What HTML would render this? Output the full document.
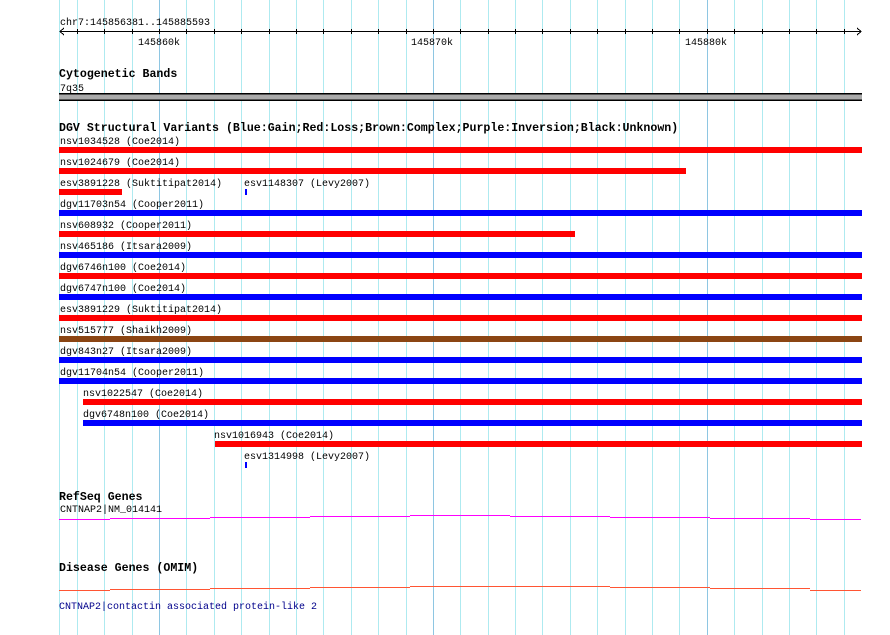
<!DOCTYPE html>
<html><head><meta charset="utf-8"><style>
html,body{margin:0;padding:0;background:#fff;}
svg{display:block;}
text{font-family:"Liberation Mono",monospace;font-size:10px;fill:#000;}
.t{font-weight:bold;font-size:11.6px;}
</style></head><body>
<svg width="890" height="635" xmlns="http://www.w3.org/2000/svg" shape-rendering="crispEdges">
<g stroke="#aeeaf0" stroke-width="1">
<line x1="59.5" y1="0" x2="59.5" y2="635"/>
<line x1="77.5" y1="0" x2="77.5" y2="635"/>
<line x1="104.5" y1="0" x2="104.5" y2="635"/>
<line x1="132.5" y1="0" x2="132.5" y2="635"/>
<line x1="186.5" y1="0" x2="186.5" y2="635"/>
<line x1="214.5" y1="0" x2="214.5" y2="635"/>
<line x1="241.5" y1="0" x2="241.5" y2="635"/>
<line x1="269.5" y1="0" x2="269.5" y2="635"/>
<line x1="296.5" y1="0" x2="296.5" y2="635"/>
<line x1="323.5" y1="0" x2="323.5" y2="635"/>
<line x1="351.5" y1="0" x2="351.5" y2="635"/>
<line x1="378.5" y1="0" x2="378.5" y2="635"/>
<line x1="406.5" y1="0" x2="406.5" y2="635"/>
<line x1="460.5" y1="0" x2="460.5" y2="635"/>
<line x1="488.5" y1="0" x2="488.5" y2="635"/>
<line x1="515.5" y1="0" x2="515.5" y2="635"/>
<line x1="542.5" y1="0" x2="542.5" y2="635"/>
<line x1="570.5" y1="0" x2="570.5" y2="635"/>
<line x1="597.5" y1="0" x2="597.5" y2="635"/>
<line x1="625.5" y1="0" x2="625.5" y2="635"/>
<line x1="652.5" y1="0" x2="652.5" y2="635"/>
<line x1="679.5" y1="0" x2="679.5" y2="635"/>
<line x1="734.5" y1="0" x2="734.5" y2="635"/>
<line x1="762.5" y1="0" x2="762.5" y2="635"/>
<line x1="789.5" y1="0" x2="789.5" y2="635"/>
<line x1="816.5" y1="0" x2="816.5" y2="635"/>
<line x1="844.5" y1="0" x2="844.5" y2="635"/>
</g>
<g stroke="#8ec6e2" stroke-width="1">
<line x1="159.5" y1="0" x2="159.5" y2="635"/>
<line x1="433.5" y1="0" x2="433.5" y2="635"/>
<line x1="707.5" y1="0" x2="707.5" y2="635"/>
</g>
<!-- ruler -->
<text x="60" y="25">chr7:145856381..145885593</text>
<g stroke="#000" stroke-width="1">
<line x1="60" y1="31.5" x2="861" y2="31.5"/>
<polyline points="64,28 60,31.5 64,35" fill="none"/>
<polyline points="857,28 861,31.5 857,35" fill="none"/>
<path d="M77.5 29v5M104.5 29v5M132.5 29v5M159.5 29v5M186.5 29v5M214.5 29v5M241.5 29v5M269.5 29v5M296.5 29v5M323.5 29v5M351.5 29v5M378.5 29v5M406.5 29v5M433.5 29v5M460.5 29v5M488.5 29v5M515.5 29v5M542.5 29v5M570.5 29v5M597.5 29v5M625.5 29v5M652.5 29v5M679.5 29v5M707.5 29v5M734.5 29v5M762.5 29v5M789.5 29v5M816.5 29v5M844.5 29v5"/>
</g>
<text x="138" y="45">145860k</text>
<text x="411" y="45">145870k</text>
<text x="685" y="45">145880k</text>
<!-- cytobands -->
<text class="t" x="59" y="77">Cytogenetic Bands</text>
<text x="60" y="91">7q35</text>
<rect x="59" y="93" width="803" height="8" fill="#000"/>
<rect x="59" y="94.5" width="803" height="5" fill="#aaaaaa"/>
<!-- DGV -->
<text class="t" x="59" y="131">DGV Structural Variants (Blue:Gain;Red:Loss;Brown:Complex;Purple:Inversion;Black:Unknown)</text>
<text x="60" y="144">nsv1034528 (Coe2014)</text>
<rect x="59" y="147" width="803" height="6" fill="#ff0000"/>
<text x="60" y="165">nsv1024679 (Coe2014)</text>
<rect x="59" y="168" width="627" height="6" fill="#ff0000"/>
<text x="60" y="186">esv3891228 (Suktitipat2014)</text>
<rect x="59" y="189" width="63" height="6" fill="#ff0000"/>
<text x="244" y="186">esv1148307 (Levy2007)</text>
<rect x="245" y="189" width="2" height="6" fill="#0000ff"/>
<text x="60" y="207">dgv11703n54 (Cooper2011)</text>
<rect x="59" y="210" width="803" height="6" fill="#0000ff"/>
<text x="60" y="228">nsv608932 (Cooper2011)</text>
<rect x="59" y="231" width="516" height="6" fill="#ff0000"/>
<text x="60" y="249">nsv465186 (Itsara2009)</text>
<rect x="59" y="252" width="803" height="6" fill="#0000ff"/>
<text x="60" y="270">dgv6746n100 (Coe2014)</text>
<rect x="59" y="273" width="803" height="6" fill="#ff0000"/>
<text x="60" y="291">dgv6747n100 (Coe2014)</text>
<rect x="59" y="294" width="803" height="6" fill="#0000ff"/>
<text x="60" y="312">esv3891229 (Suktitipat2014)</text>
<rect x="59" y="315" width="803" height="6" fill="#ff0000"/>
<text x="60" y="333">nsv515777 (Shaikh2009)</text>
<rect x="59" y="336" width="803" height="6" fill="#8b4513"/>
<text x="60" y="354">dgv843n27 (Itsara2009)</text>
<rect x="59" y="357" width="803" height="6" fill="#0000ff"/>
<text x="60" y="375">dgv11704n54 (Cooper2011)</text>
<rect x="59" y="378" width="803" height="6" fill="#0000ff"/>
<text x="83" y="396">nsv1022547 (Coe2014)</text>
<rect x="83" y="399" width="779" height="6" fill="#ff0000"/>
<text x="83" y="417">dgv6748n100 (Coe2014)</text>
<rect x="83" y="420" width="779" height="6" fill="#0000ff"/>
<text x="214" y="438">nsv1016943 (Coe2014)</text>
<rect x="215" y="441" width="647" height="6" fill="#ff0000"/>
<text x="244" y="459">esv1314998 (Levy2007)</text>
<rect x="245" y="462" width="2" height="6" fill="#0000ff"/>
<!-- RefSeq -->
<text class="t" x="59" y="500">RefSeq Genes</text>
<text x="60" y="512">CNTNAP2|NM_014141</text>
<path fill="none" stroke="#ff00ff" stroke-width="1" d="M59 519.5H110M110 518.5H210M210 517.5H310M310 516.5H410M410 515.5H510M510 516.5H610M610 517.5H710M710 518.5H810M810 519.5H861"/>
<!-- OMIM -->
<text class="t" x="59" y="571">Disease Genes (OMIM)</text>
<path fill="none" stroke="#ff5533" stroke-width="1" d="M59 590.5H110M110 589.5H210M210 588.5H310M310 587.5H410M410 586.5H510M510 586.5H610M610 587.5H710M710 588.5H810M810 590.5H861"/>
<text x="59" y="609" style="fill:#00008b">CNTNAP2|contactin associated protein-like 2</text>
</svg>
</body></html>
